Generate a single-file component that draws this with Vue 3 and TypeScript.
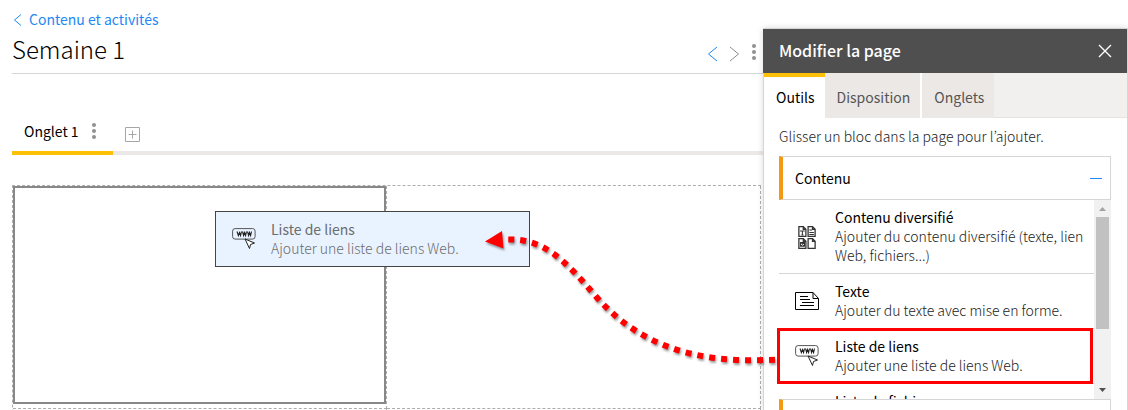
<script setup lang="ts">
import { ref } from 'vue'

interface Block {
  title: string
  text: string
  icon: 'mixed' | 'text' | 'links' | 'files'
}

const blocks: Block[] = [
  { title: 'Contenu diversifié', text: 'Ajouter du contenu diversifié (texte, lien Web, fichiers...)', icon: 'mixed' },
  { title: 'Texte', text: 'Ajouter du texte avec mise en forme.', icon: 'text' },
  { title: 'Liste de liens', text: 'Ajouter une liste de liens Web.', icon: 'links' },
  { title: 'Liste de fichiers', text: '', icon: 'files' },
]

const panelTabs = ['Outils', 'Disposition', 'Onglets']
const activeTab = ref('Outils')
</script>

<template>
  <div class="page">
    <main class="main">
      <a class="back" href="#">
        <svg width="9" height="12" viewBox="0 0 9 12"><path d="M8 0.5 1.5 6 8 11.5" /></svg>
        <span>Contenu et activités</span>
      </a>
      <header class="heading">
        <h1>Semaine 1</h1>
        <div class="tools">
          <button type="button" class="prev" aria-label="Précédent">
            <svg width="11" height="16" viewBox="0 0 11 16"><path d="M10 1 1.5 8 10 15" /></svg>
          </button>
          <button type="button" class="next" aria-label="Suivant">
            <svg width="11" height="16" viewBox="0 0 11 16"><path d="M1 1 9.500 8 1 15" /></svg>
          </button>
          <button type="button" class="dots" aria-label="Options de la page">
            <svg width="6" height="16" viewBox="0 0 6 16"><circle cx="3" cy="2" r="2" /><circle cx="3" cy="8" r="2" /><circle cx="3" cy="14" r="2" /></svg>
          </button>
        </div>
      </header>

      <nav class="tabs">
        <div class="tab">
          <a href="#">Onglet 1</a>
          <button type="button" class="dots" aria-label="Options de l’onglet">
            <svg width="6" height="16" viewBox="0 0 6 16"><circle cx="3" cy="2" r="2" /><circle cx="3" cy="8" r="2" /><circle cx="3" cy="14" r="2" /></svg>
          </button>
        </div>
        <button type="button" class="add" aria-label="Ajouter un onglet">
          <svg width="15" height="15" viewBox="0 0 15 15"><path d="M.5 .5h14v14H.5zM7.500 3.500v8M3.500 7.500h8" /></svg>
        </button>
      </nav>

      <section class="board">
        <div class="cell"><div class="drop"></div></div>
        <div class="cell"></div>
        <div class="cell"></div>
        <div class="cell"></div>
      </section>
    </main>

    <aside class="panel">
      <header class="panel-head">
        <h2>Modifier la page</h2>
        <button type="button" aria-label="Fermer">
          <svg width="14" height="14" viewBox="0 0 14 14"><path d="M1 1 13 13M13 1 1 13" /></svg>
        </button>
      </header>
      <div class="panel-tabs" role="tablist">
        <button
          v-for="t in panelTabs"
          :key="t"
          type="button"
          role="tab"
          :aria-selected="t === activeTab"
          :class="{ active: t === activeTab }"
          @click="activeTab = t"
        >{{ t }}</button>
      </div>
      <div class="panel-body">
        <p class="hint">Glisser un bloc dans la page pour l’ajouter.</p>
        <button type="button" class="section">
          <span>Contenu</span>
          <svg width="12" height="1" viewBox="0 0 12 1"><path d="M0 .5h12" /></svg>
        </button>
        <div class="list-wrap">
          <ul class="list">
            <li v-for="b in blocks" :key="b.title" draggable="true">
              <svg v-if="b.icon === 'mixed'" class="icon" width="24" height="24" viewBox="0 0 25 26">
                <g fill="none" stroke="#333" stroke-width="1.400">
                  <path d="M3.700 1.700h4.800l2.800 3v7.600H3.700zM8.500 1.700v3h2.800M13.700 1.700h4.800l2.800 3v7.600h-7.600zM18.500 1.700v3h2.800M3.700 14.700h4.800l2.800 3v7.600H3.700zM8.500 14.700v3h2.800M13.700 14.700h4.800l2.800 3v7.600h-7.600zM18.500 14.700v3h2.800" />
                  <path d="M5 6.500h5M7.500 6.500v4.500M6.500 10.700h2M15 5.500h3M15 8h5M15 10.300h5M5.500 19h4.300v4H5.500zM5.500 23l4-4M6 19l3.500 4" stroke-width="1.100" />
                </g>
              </svg>
              <svg v-else-if="b.icon === 'text'" class="icon" width="24" height="18" viewBox="0 0 24 18">
                <path d="M.5 .5h17.500l5.500 6v11H.5zM18 .5v6h5.500M5 4.500h8M5 7.500h10M7 10.500h12M5 13.500h14" fill="none" stroke="#000" />
              </svg>
              <svg v-else-if="b.icon === 'links'" class="icon" width="24" height="22" viewBox="0 0 24 22">
                <rect x=".6" y=".6" width="22.500" height="10.500" rx="2.500" fill="none" stroke="#555" />
                <path d="M5 3.500 6.400 7.500 7.500 4.500 8.600 7.500 9.500 3.500M10.500 3.500 11.600 7.500 12.500 4.500 13.600 7.500 14.500 3.500M15.500 3.500 16.600 7.500 17.500 4.500 18.600 7.500 19.500 3.500" fill="none" stroke="#222" stroke-width="1.100" />
                <path d="M13 11 22.500 15 18.500 16.500 17.500 20.500z" fill="#fff" stroke="#222" />
              </svg>
              <span v-else class="blank"></span>
              <div class="copy">
                <strong>{{ b.title }}</strong>
                <span v-if="b.text">{{ b.text }}</span>
              </div>
            </li>
          </ul>
          <div class="scrollbar" aria-hidden="true">
            <svg width="7" height="4" viewBox="0 0 7 4"><path d="M0 4 3.500 0 7 4z" fill="#a3a3a3" /></svg>
            <div class="track"><div class="thumb"></div></div>
            <svg width="7" height="4" viewBox="0 0 7 4"><path d="M0 0 3.500 4 7 0z" fill="#505050" /></svg>
          </div>
          <div class="highlight"></div>
        </div>
        <button type="button" class="section" aria-label="Section suivante"></button>
      </div>
    </aside>

    <div class="ghost">
      <svg class="icon" width="24" height="22" viewBox="0 0 24 22">
        <rect x=".6" y=".6" width="22.500" height="10.500" rx="2.500" fill="none" stroke="#555" />
        <path d="M5 3.500 6.400 7.500 7.500 4.500 8.600 7.500 9.500 3.500M10.500 3.500 11.600 7.500 12.500 4.500 13.600 7.500 14.500 3.500M15.500 3.500 16.600 7.500 17.500 4.500 18.600 7.500 19.500 3.500" fill="none" stroke="#222" stroke-width="1.100" />
        <path d="M13 11 22.500 15 18.500 16.500 17.500 20.500z" fill="#fff" stroke="#222" />
      </svg>
      <div class="copy">
        <strong>Liste de liens</strong>
        <span>Ajouter une liste de liens Web.</span>
      </div>
    </div>

    <svg class="arrow" width="300" height="150" viewBox="480 225 300 150" aria-hidden="true">
      <path d="M775 359.700C715 362.500 648 356 596 296.500C566 262 545 237.500 505 239.500" fill="none" stroke="#f00" stroke-width="6" stroke-dasharray="6 6" />
      <path d="M485 241.500 502 231 503.500 248.500z" fill="#f00" />
    </svg>
  </div>
</template>

<style>
body {
  background: #fff;
}
</style>

<style scoped>
.page {
  position: relative;
  display: flex;
  align-items: stretch;
  height: 100vh;
  overflow: hidden;
  font-family: "Noto Sans CJK JP", "Noto Sans", sans-serif;
  font-size: 14px;
  line-height: 19px;
  color: #000;
}
* {
  box-sizing: border-box;
}
button {
  padding: 0;
  border: 0;
  background: none;
  font: inherit;
  color: inherit;
}
svg {
  display: block;
  flex: none;
}
a {
  color: inherit;
  text-decoration: none;
}
.main {
  flex: 1;
  min-width: 0;
  padding: 10px 0 0 12px;
}
.back {
  display: flex;
  align-items: center;
  gap: 7px;
  padding-left: 1px;
  color: #1e88f5;
}
.back path,
.prev path {
  fill: none;
  stroke: #1e88f5;
}
.next path {
  fill: none;
  stroke: #8c8c8c;
}
.heading {
  display: flex;
  justify-content: space-between;
  height: 45px;
  border-bottom: 1px solid #d6d6d6;
}
h1 {
  margin: 5px 0 0;
  font-size: 24px;
  line-height: 30px;
  font-weight: 300;
}
.tools {
  display: flex;
  align-items: center;
  gap: 11px;
  padding: 5px 6px 0 0;
}
.tools .dots {
  margin-bottom: 4px;
}
.dots circle {
  fill: #919191;
}
.tabs {
  display: flex;
  align-items: flex-end;
  height: 41px;
  margin-top: 40px;
  border-bottom: 4px solid #ebe8e6;
}
.tab {
  display: flex;
  align-items: center;
  gap: 12px;
  height: 41px;
  margin-bottom: -4px;
  padding: 0 16px 3px 12px;
  border-bottom: 4px solid #ffc107;
}
.add {
  margin: 0 0 9px 12px;
}
.add path {
  fill: none;
  stroke: #a6a6a6;
}
.board {
  display: grid;
  grid-template-columns: 1fr 1fr;
  margin: 30px 2px 0 0;
  border: dashed #adadad;
  border-width: 1px 0 0 1px;
}
.cell {
  display: flex;
  min-height: 223px;
  padding-bottom: 4px;
  border: dashed #adadad;
  border-width: 0 1px 1px 0;
}
.drop {
  flex: 1;
  border: 2px solid #888;
}
.panel {
  position: relative;
  width: 365px;
  flex: none;
  margin-top: 28px;
  border: 1px solid #d5d5d5;
  border-bottom: 0;
  background: #fff;
  box-shadow: 0 0 6px rgba(0, 0, 0, 0.15);
}
.panel-head {
  display: flex;
  align-items: center;
  justify-content: space-between;
  height: 44px;
  margin-left: -1px;
  padding: 0 15px 0 16px;
  background: #4f4f4f;
  color: #fff;
}
h2 {
  margin: 0 0 2px;
  font-size: 16px;
  line-height: 24px;
  font-weight: 500;
}
.panel-head path {
  fill: none;
  stroke: #fff;
  stroke-width: 1.400;
}
.panel-tabs {
  display: flex;
  height: 45px;
  background: #f2f0ef;
  border-bottom: 1px solid #e6e3e1;
}
.panel-tabs button {
  height: 45px;
  padding: 4px 10px 0 12px;
  border-top: 0;
  border-right: 2px solid #fff;
  background: #ebe8e6;
  color: #555;
}
.panel-tabs button:last-child {
  border-right: 0;
}
.panel-tabs .active {
  padding-top: 0;
  border-top: 4px solid #ffc107;
  border-right: 0;
  background: #fff;
  color: #000;
}
.panel-body {
  padding: 9px 16px 0 15px;
}
.hint {
  margin: 0 0 10px;
  color: #222;
  font-weight: 300;
}
.section {
  display: flex;
  align-items: center;
  justify-content: space-between;
  width: 100%;
  height: 44px;
  padding: 0 8px 0 12px;
  border: 1px solid #d5d5d5;
  border-left: 4px solid #f39912;
}
.section path {
  stroke: #1e88f5;
}
.list-wrap {
  position: relative;
  display: flex;
  height: 199px;
}
.list {
  flex: 1;
  margin: 0;
  padding: 0;
  overflow: hidden;
  list-style: none;
}
.list li {
  display: flex;
  align-items: center;
  gap: 16px;
  padding: 8px 4px 8px 16px;
  border-bottom: 1px solid #d5d5d5;
}
.blank {
  width: 24px;
}
.copy {
  display: flex;
  flex-direction: column;
}
.copy strong {
  font-weight: 400;
}
.copy span {
  color: #222;
  font-weight: 300;
}
.scrollbar {
  display: flex;
  flex-direction: column;
  align-items: center;
  width: 17px;
  padding: 7px 0;
  background: #f1f1f1;
}
.track {
  flex: 1;
  width: 13px;
  padding: 6px 0;
}
.thumb {
  height: 112px;
  background: #c1c1c1;
}
.highlight {
  position: absolute;
  top: 128px;
  left: -2px;
  right: 18px;
  height: 56px;
  border: 3px solid #f00;
}
.ghost {
  position: absolute;
  top: 211px;
  left: 215px;
  display: flex;
  align-items: center;
  gap: 15px;
  width: 315px;
  height: 56px;
  padding: 0 16px;
  border: 1px solid #444;
  background: #e9f3ff;
}
.ghost .copy strong,
.ghost .copy span {
  color: #6c6c6c;
}
.arrow {
  position: absolute;
  top: 225px;
  left: 480px;
  filter: drop-shadow(1px 2px 1px rgba(0, 0, 0, 0.4));
}
</style>
